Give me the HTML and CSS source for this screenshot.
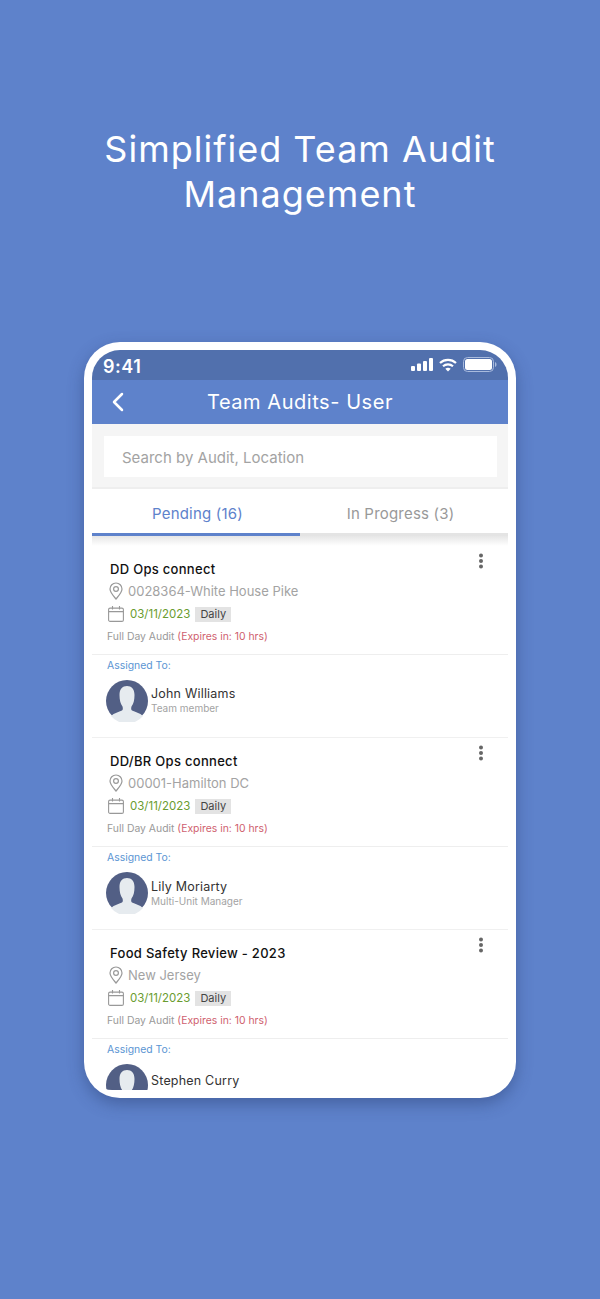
FILE: index.html
```html
<!doctype html>
<html lang="en">
<head>
	<meta charset="utf-8">
	<title>Team Audits</title>
	<link rel="stylesheet" href="styles.css">
</head>
<body>
	<h1 class="headline">Simplified Team Audit Management</h1>

	<div class="phone">
		<div class="screen">
			<div class="status-bar">
				<span class="clock">9:41</span>
				<div class="status-icons">
					<svg width="22" height="13" viewBox="0 0 22 13" fill="#fff"><rect x="0" y="8" width="4" height="5" rx="1"/><rect x="6" y="5.500" width="4" height="7.500" rx="1"/><rect x="12" y="3" width="4" height="10" rx="1"/><rect x="18" y="0" width="4" height="13" rx="1"/></svg>
					<svg width="18" height="14" viewBox="0 0 18 14" fill="none" stroke="#fff" stroke-width="2.200"><path d="M1 5C5.500 .8 12.500 .8 17 5"/><path d="M4 8.300C6.800 5.800 11.200 5.800 14 8.300"/><path d="M9 13.500L6.300 10.800C8 9.400 10 9.400 11.700 10.800Z" fill="#fff" stroke="none"/></svg>
					<svg width="34" height="15" viewBox="0 0 34 15"><rect x=".5" y=".5" width="30" height="14" rx="4" fill="none" stroke="#a9bbdd"/><rect x="2" y="2" width="27" height="11" rx="2.500" fill="#fff"/><path d="M32 5v5c1-.4 1.500-1.400 1.500-2.500S33 5.400 32 5z" fill="#a9bbdd"/></svg>
				</div>
			</div>

			<header class="app-bar">
				<svg class="back-icon" width="14" height="20" viewBox="0 0 14 20" fill="none" stroke="#fff" stroke-width="2.500" stroke-linecap="round" stroke-linejoin="round"><path d="M11 2L3 10l8 8"/></svg>
				<h2>Team Audits- User</h2>
			</header>

			<div class="search-wrap">
				<div class="search-box">Search by Audit, Location</div>
			</div>

			<nav class="tabs">
				<div class="tab active">Pending (16)</div>
				<div class="tab">In Progress (3)</div>
			</nav>
			<div class="tabs-shadow"></div>

			<section class="card">
				<svg class="more" width="6" height="16" viewBox="0 0 6 16" fill="#666"><circle cx="3" cy="2.500" r="2"/><circle cx="3" cy="8" r="2"/><circle cx="3" cy="13.500" r="2"/></svg>
				<h3>DD Ops connect</h3>
				<div class="location">
					<svg width="14" height="18" viewBox="0 0 14 18" fill="none" stroke="#999" stroke-width="1.200"><path d="M7 17C3.500 12.800 1 10.200 1 7a6 6 0 0 1 12 0c0 3.200-2.500 5.800-6 10z"/><circle cx="7" cy="7" r="2.400"/></svg>
					<span>0028364-White House Pike</span>
				</div>
				<div class="date-row">
					<svg width="16" height="16" viewBox="0 0 16 16" fill="none" stroke="#999" stroke-width="1.100"><rect x=".6" y="2.100" width="14.800" height="13.300" rx="1.500"/><path d="M.6 5.600h14.800M4.500 0v3.500M11.500 0v3.500"/></svg>
					<span class="date">03/11/2023</span>
					<span class="freq">Daily</span>
				</div>
				<p class="expiry">Full Day Audit <span>(Expires in: 10 hrs)</span></p>
				<div class="assigned">
					<p class="assigned-label">Assigned To:</p>
					<div class="person">
						<svg class="avatar" width="42" height="42" viewBox="0 0 42 42"><circle cx="21" cy="21" r="21" fill="#525f85"/><path d="M5 36c3-3 8-4 11-5.500 1-.8 1-2.500.5-4C14.500 24 13.500 20 13.500 15c0-6 3-9 7.500-9s7.500 3 7.500 9c0 5-1 9-3 11.500-.5 1.500-.5 3.200.5 4C29 32 34 33 37 36a21 21 0 0 1-32 0z" fill="#e6ebef"/></svg>
						<div>
							<div class="person-name">John Williams</div>
							<div class="person-role">Team member</div>
						</div>
					</div>
				</div>
			</section>

			<section class="card">
				<svg class="more" width="6" height="16" viewBox="0 0 6 16" fill="#666"><circle cx="3" cy="2.500" r="2"/><circle cx="3" cy="8" r="2"/><circle cx="3" cy="13.500" r="2"/></svg>
				<h3>DD/BR Ops connect</h3>
				<div class="location">
					<svg width="14" height="18" viewBox="0 0 14 18" fill="none" stroke="#999" stroke-width="1.200"><path d="M7 17C3.500 12.800 1 10.200 1 7a6 6 0 0 1 12 0c0 3.200-2.500 5.800-6 10z"/><circle cx="7" cy="7" r="2.400"/></svg>
					<span>00001-Hamilton DC</span>
				</div>
				<div class="date-row">
					<svg width="16" height="16" viewBox="0 0 16 16" fill="none" stroke="#999" stroke-width="1.100"><rect x=".6" y="2.100" width="14.800" height="13.300" rx="1.500"/><path d="M.6 5.600h14.800M4.500 0v3.500M11.500 0v3.500"/></svg>
					<span class="date">03/11/2023</span>
					<span class="freq">Daily</span>
				</div>
				<p class="expiry">Full Day Audit <span>(Expires in: 10 hrs)</span></p>
				<div class="assigned">
					<p class="assigned-label">Assigned To:</p>
					<div class="person">
						<svg class="avatar" width="42" height="42" viewBox="0 0 42 42"><circle cx="21" cy="21" r="21" fill="#525f85"/><path d="M5 36c3-3 8-4 11-5.500 1-.8 1-2.500.5-4C14.500 24 13.500 20 13.500 15c0-6 3-9 7.500-9s7.500 3 7.500 9c0 5-1 9-3 11.500-.5 1.500-.5 3.200.5 4C29 32 34 33 37 36a21 21 0 0 1-32 0z" fill="#e6ebef"/></svg>
						<div>
							<div class="person-name name-low">Lily Moriarty</div>
							<div class="person-role">Multi-Unit Manager</div>
						</div>
					</div>
				</div>
			</section>

			<section class="card">
				<svg class="more" width="6" height="16" viewBox="0 0 6 16" fill="#666"><circle cx="3" cy="2.500" r="2"/><circle cx="3" cy="8" r="2"/><circle cx="3" cy="13.500" r="2"/></svg>
				<h3>Food Safety Review - 2023</h3>
				<div class="location">
					<svg width="14" height="18" viewBox="0 0 14 18" fill="none" stroke="#999" stroke-width="1.200"><path d="M7 17C3.500 12.800 1 10.200 1 7a6 6 0 0 1 12 0c0 3.200-2.500 5.800-6 10z"/><circle cx="7" cy="7" r="2.400"/></svg>
					<span>New Jersey</span>
				</div>
				<div class="date-row">
					<svg width="16" height="16" viewBox="0 0 16 16" fill="none" stroke="#999" stroke-width="1.100"><rect x=".6" y="2.100" width="14.800" height="13.300" rx="1.500"/><path d="M.6 5.600h14.800M4.500 0v3.500M11.500 0v3.500"/></svg>
					<span class="date">03/11/2023</span>
					<span class="freq">Daily</span>
				</div>
				<p class="expiry">Full Day Audit <span>(Expires in: 10 hrs)</span></p>
				<div class="assigned">
					<p class="assigned-label">Assigned To:</p>
					<div class="person">
						<svg class="avatar" width="42" height="42" viewBox="0 0 42 42"><circle cx="21" cy="21" r="21" fill="#525f85"/><path d="M5 36c3-3 8-4 11-5.500 1-.8 1-2.500.5-4C14.500 24 13.500 20 13.500 15c0-6 3-9 7.500-9s7.500 3 7.500 9c0 5-1 9-3 11.500-.5 1.500-.5 3.200.5 4C29 32 34 33 37 36a21 21 0 0 1-32 0z" fill="#e6ebef"/></svg>
						<div>
							<div class="person-name name-lower">Stephen Curry</div>
						</div>
					</div>
				</div>
			</section>
		</div>
	</div>
</body>
</html>
```

FILE: styles.css
```css
:root {
	--main-color: #5e82cb;
	--status-color: #5170ad;
	--grey-text: #a3a3a3;
}

html {
	background-color: var(--main-color);
}
body {
	margin: 0;
	height: 1299px;
	overflow: hidden;
	display: flex;
	flex-direction: column;
	align-items: center;
	font-family: Inter, "Noto Sans", sans-serif;
}
h1, h2, h3, p {
	margin: 0;
	font-weight: normal;
}

.headline {
	width: 420px;
	margin-top: 127px;
	text-align: center;
	color: #fff;
	font-size: 36px;
	line-height: 45px;
	letter-spacing: 1px;
}

/* phone frame */
.phone {
	margin-top: 125px;
	width: 416px;
	height: 740px;
	padding: 8px;
	background-color: #fff;
	border-radius: 36px;
	box-shadow: 0 6px 16px rgba(40, 60, 110, .45);
}
.screen {
	height: 740px;
	overflow: hidden;
	border-radius: 28px 28px 20px 20px;
	background-color: #fff;
}

.status-bar {
	height: 30px;
	padding: 2px 11px 0;
	box-sizing: border-box;
	display: flex;
	align-items: center;
	justify-content: space-between;
	background-color: var(--status-color);
	color: #fff;
}
.clock {
	font-size: 18px;
	font-weight: 600;
	letter-spacing: .5px;
}
.status-icons {
	display: flex;
	align-items: center;
	gap: 6px;
	margin-top: -3px;
}

.app-bar {
	height: 44px;
	display: flex;
	align-items: center;
	justify-content: center;
	position: relative;
	background-color: var(--main-color);
}
.app-bar h2 {
	color: #fff;
	font-size: 20px;
	letter-spacing: .55px;
}
.back-icon {
	position: absolute;
	left: 19px;
	top: 12px;
}

.search-wrap {
	height: 65px;
	padding: 12px 11px 0 12px;
	box-sizing: border-box;
	background-color: #f5f5f5;
	border-bottom: 2px solid #eee;
}
.search-box {
	height: 41px;
	padding-left: 18px;
	line-height: 43px;
	background-color: #fff;
	color: var(--grey-text);
	font-size: 15px;
}

.tabs {
	display: flex;
	height: 45px;
	margin-top: 2px;
	border-bottom: 3px solid #e4e4e4;
	box-sizing: border-box;
}
.tab {
	width: 50%;
	box-sizing: border-box;
	padding-right: 7px;
	text-align: center;
	line-height: 46px;
	font-size: 15px;
	color: #999;
	letter-spacing: .2px;
}
.tab.active {
	height: 45px;
	padding: 0 0 0 3px;
	color: var(--main-color);
	border-bottom: 3px solid var(--main-color);
}
.tabs-shadow {
	height: 10px;
	background: linear-gradient(#e6e6e6, #fff);
}

.card {
	position: relative;
	height: 192px;
	box-sizing: border-box;
	padding-top: 14px;
	border-bottom: 1px solid #f0f0f0;
}
.card h3 {
	margin-left: 18px;
	font-size: 13px;
	line-height: 18px;
	font-weight: 500;
	color: #111;
	letter-spacing: .3px;
}
.more {
	position: absolute;
	right: 24px;
	top: 7px;
}
.location {
	display: flex;
	align-items: center;
	gap: 5px;
	height: 18px;
	margin: 4px 0 0 17px;
	color: var(--grey-text);
	font-size: 13px;
}
.date-row {
	display: flex;
	align-items: center;
	height: 16px;
	margin: 6px 0 0 16px;
}
.date {
	margin-left: 6px;
	font-size: 11.500px;
	color: #6a9c2f;
}
.freq {
	margin-left: 5px;
	padding: 0 5px;
	line-height: 15px;
	font-size: 11px;
	background-color: #e3e3e3;
	color: #444;
}
.expiry {
	margin: 8px 0 0 15px;
	font-size: 10.400px;
	line-height: 14px;
	color: #999;
}
.expiry span {
	color: #cf5f6f;
}
.assigned {
	margin-top: 10px;
	padding-top: 4px;
	border-top: 1px solid #eee;
}
.assigned-label {
	margin-left: 15px;
	font-size: 10.400px;
	line-height: 14px;
	color: #5b95d3;
}
.person {
	display: flex;
	align-items: flex-start;
	gap: 3px;
	margin: 7px 0 0 14px;
}
.person-name {
	margin-top: 6px;
	font-size: 12.500px;
	line-height: 15px;
	color: #333;
	letter-spacing: .2px;
}
.name-low {
	margin-top: 7px;
}
.name-lower {
	margin-top: 9px;
}
.person-role {
	font-size: 10px;
	line-height: 14px;
	color: var(--grey-text);
}
```
